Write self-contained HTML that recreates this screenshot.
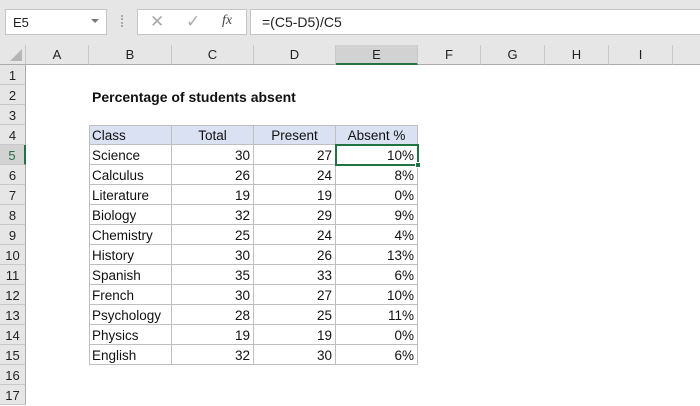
<!DOCTYPE html>
<html><head><style>
*{margin:0;padding:0;box-sizing:border-box}
body{width:700px;height:400px;overflow:hidden;background:#fff;font-family:"Liberation Sans",sans-serif;position:relative}
.top{position:absolute;left:0;top:0;width:700px;height:45px;background:#e6e6e6}
.nb{position:absolute;left:5px;top:9px;width:102px;height:26px;background:#fff;border:1px solid #c6c6c6;font-size:13px;padding:5px 0 0 7px;color:#222}
.fx{position:absolute;left:137px;top:9px;width:110px;height:26px;background:#fff;border:1px solid #c6c6c6}
.fi{position:absolute;left:250px;top:9px;width:450px;height:26px;background:#fff;border:1px solid #c6c6c6;border-right:none;font-size:14px;padding:4px 0 0 11px;color:#222}
.c{position:absolute;font-size:13px;color:#111;height:20px;line-height:20px;white-space:nowrap}
.ch{position:absolute;top:45px;height:20px;background:#e6e6e6;border-right:1px solid #c8c8c8;border-bottom:1px solid #ababab;font-size:13px;text-align:center;line-height:20px;color:#222}
.rh{position:absolute;left:0;width:26px;height:20px;background:#e6e6e6;border-bottom:1px solid #c8c8c8;border-right:1px solid #ababab;font-size:13px;text-align:center;line-height:21px;color:#222}
.cell{position:absolute;height:20px;border-right:1px solid #bfbfbf;border-bottom:1px solid #bfbfbf;font-size:13.5px;line-height:21px;padding:0 3px;color:#111;white-space:nowrap}
.r{text-align:right}
</style></head><body>
<div class="top"></div>
<div class="nb">E5<span style="position:absolute;right:7px;top:9px;border-left:4px solid transparent;border-right:4px solid transparent;border-top:4px solid #777"></span></div>
<div style="position:absolute;left:121px;top:15px;width:2px;height:12px;border-left:2px dotted #aaa"></div>
<div class="fx">
<span style="position:absolute;left:12px;top:2px;font-size:17px;color:#aaa">✕</span>
<span style="position:absolute;left:48px;top:2px;font-size:17px;color:#aaa">✓</span>
<span style="position:absolute;left:84px;top:3px;font-size:14px;font-style:italic;font-family:'Liberation Serif',serif;color:#444">fx</span>
</div>
<div class="fi">=(C5-D5)/C5</div>
<div class="ch" style="left:0;width:26px;background:#e6e6e6"><span style="position:absolute;right:3px;bottom:3px;border-left:12px solid transparent;border-bottom:12px solid #b5b5b5"></span></div>
<div class="ch" style="left:26px;width:63px">A</div>
<div class="ch" style="left:89px;width:83px">B</div>
<div class="ch" style="left:172px;width:82px">C</div>
<div class="ch" style="left:254px;width:82px">D</div>
<div class="ch" style="left:336px;width:82px;background:#d2d2d2;border-bottom:2px solid #217346">E</div>
<div class="ch" style="left:418px;width:63px">F</div>
<div class="ch" style="left:481px;width:64px">G</div>
<div class="ch" style="left:545px;width:64px">H</div>
<div class="ch" style="left:609px;width:64px">I</div>
<div class="ch" style="left:673px;width:27px;border-right:none"></div>
<div class="rh" style="top:65px">1</div><div class="rh" style="top:85px">2</div><div class="rh" style="top:105px">3</div><div class="rh" style="top:125px">4</div>
<div class="rh" style="top:145px;background:#d2d2d2;border-right:2px solid #217346;color:#217346">5</div>
<div class="rh" style="top:165px">6</div><div class="rh" style="top:185px">7</div><div class="rh" style="top:205px">8</div><div class="rh" style="top:225px">9</div><div class="rh" style="top:245px">10</div><div class="rh" style="top:265px">11</div><div class="rh" style="top:285px">12</div><div class="rh" style="top:305px">13</div><div class="rh" style="top:325px">14</div><div class="rh" style="top:345px">15</div><div class="rh" style="top:365px">16</div><div class="rh" style="top:385px">17</div>
<div class="c" style="left:92px;top:87px;font-weight:bold;font-size:14px">Percentage of students absent</div>
<div style="position:absolute;left:89px;top:125px;width:329px;height:20px;background:#d9e1f2;border-top:1px solid #bfbfbf;border-left:1px solid #bfbfbf"></div>
<div style="position:absolute;left:89px;top:145px;height:220px;border-left:1px solid #bfbfbf"></div>
<div id="t"></div>
<script>
var d=[["Class","Total","Present","Absent %"],["Science",30,27,"10%"],["Calculus",26,24,"8%"],["Literature",19,19,"0%"],["Biology",32,29,"9%"],["Chemistry",25,24,"4%"],["History",30,26,"13%"],["Spanish",35,33,"6%"],["French",30,27,"10%"],["Psychology",28,25,"11%"],["Physics",19,19,"0%"],["English",32,30,"6%"]];
var xs=[89,172,254,336],ws=[83,82,82,82],h="";
d.forEach(function(r,i){r.forEach(function(v,j){
h+='<div class="cell'+(i>0&&j>0?' r':'')+'" style="left:'+xs[j]+'px;top:'+(125+20*i)+'px;width:'+ws[j]+'px;'+(i==0&&j>0?'text-align:center;':'')+'">'+v+'</div>';});});
document.getElementById("t").innerHTML=h;
</script>
<div style="position:absolute;left:335px;top:144px;width:84px;height:22px;border:2px solid #217346"></div>
<div style="position:absolute;left:415px;top:162px;width:6px;height:6px;background:#217346;border:1px solid #fff"></div>
</body></html>
